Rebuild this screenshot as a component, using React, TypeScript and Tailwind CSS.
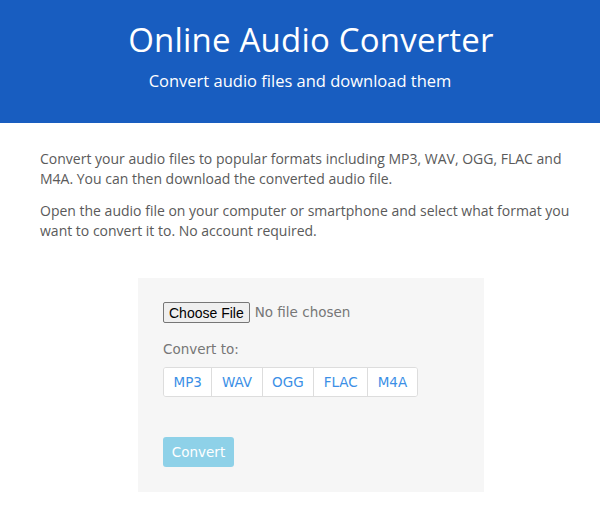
import { useState } from "react";

const formats = ["MP3", "WAV", "OGG", "FLAC", "M4A"];

export default function App() {
  const [format, setFormat] = useState<string | null>(null);

  return (
    <div className="min-h-[514px] bg-white font-['Open_Sans',sans-serif]">
      <header className="bg-[#185dc0] h-[123px] flex flex-col items-center text-white">
        <h1 className="mt-[18px] ml-[22px] text-[33px] leading-[44px] tracking-[0.2px]">Online Audio Converter</h1>
        <p className="mt-[8px] text-[16.5px] leading-[22px]">Convert audio files and download them</p>
      </header>

      <div className="pl-[40px] pr-[20px] pt-[26px] text-[14px] leading-[20px] text-[#5a5a5a]">
        <p>
          Convert your audio files to popular formats including MP3, WAV, OGG, FLAC and M4A. You can then download the
          converted audio file.
        </p>
        <p className="mt-[12px]">
          Open the audio file on your computer or smartphone and select what format you want to convert it to. No
          account required.
        </p>
      </div>

      <div className="ml-[138px] mt-[37px] w-[346px] h-[214px] bg-[#f6f6f6] px-[25px] pt-[24px]">
        <div className="flex items-center gap-[5px] font-['DejaVu_Sans',sans-serif] text-[13.5px] text-[#777]">
          <button className="h-[21px] px-[5px] border border-[#767676] rounded-[2px] bg-[#efefef] text-[14px] text-black font-['Liberation_Sans',sans-serif] leading-none">
            Choose File
          </button>
          <span>No file chosen</span>
        </div>

        <div className="mt-[17px] font-['DejaVu_Sans',sans-serif] text-[13.5px] text-[#777] leading-[18px]">
          Convert to:
        </div>

        <div className="mt-[9px] inline-flex border border-[#dddddd] rounded-[3px] bg-white overflow-hidden">
          {formats.map((f, i) => (
            <button
              key={f}
              onClick={() => setFormat(f)}
              className={
                "h-[28px] px-[9.5px] font-['DejaVu_Sans',sans-serif] text-[13.5px] text-[#3b8fe6] " +
                (i > 0 ? "border-l border-[#dddddd] " : "") +
                (format === f ? "bg-[#e8f1fc]" : "bg-white")
              }
            >
              {f}
            </button>
          ))}
        </div>

        <div className="mt-[40px]">
          <button className="h-[30px] w-[71px] rounded-[3px] bg-[#8ed1e8] text-white text-[13.5px] font-['DejaVu_Sans',sans-serif]">
            Convert
          </button>
        </div>
      </div>
    </div>
  );
}
